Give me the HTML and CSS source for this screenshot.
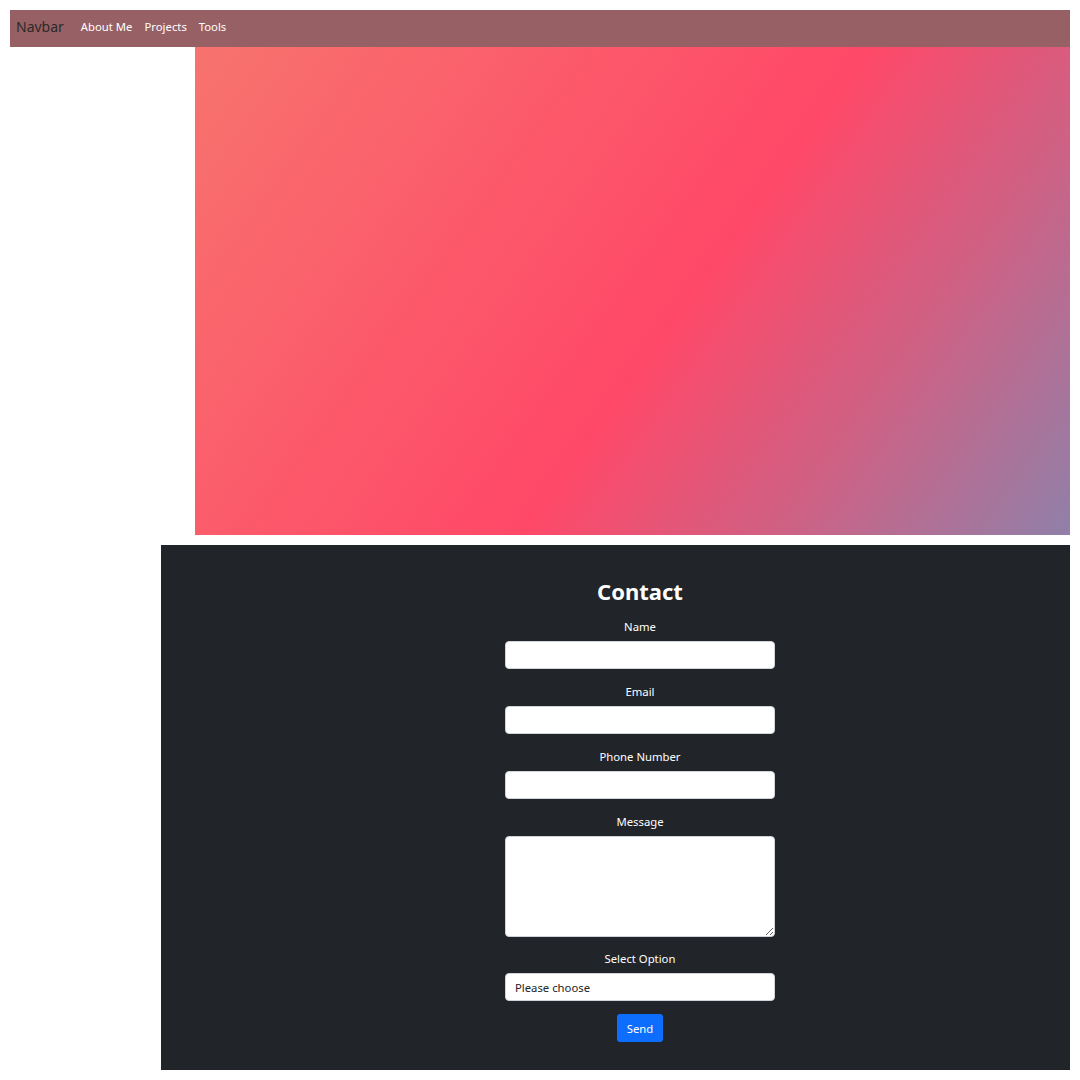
FILE: index.html
```html
<!DOCTYPE html>
<html>
<head>
<meta charset="utf-8">
<link rel="stylesheet" href="styles.css">
</head>
<body>
<nav class="navbar">
  <span class="brand">Navbar</span>
  <a class="nav-link" href="#">About Me</a>
  <a class="nav-link" href="#">Projects</a>
  <a class="nav-link" href="#">Tools</a>
</nav>
<div class="hero"></div>
<section class="contact">
  <h2 class="title">Contact</h2>
  <form class="form">
    <label class="label">Name</label>
    <input class="field" type="text">
    <label class="label">Email</label>
    <input class="field" type="text">
    <label class="label">Phone Number</label>
    <input class="field" type="text">
    <label class="label">Message</label>
    <textarea class="field area"></textarea>
    <label class="label">Select Option</label>
    <div class="field select">Please choose</div>
    <button class="btn" type="button">Send</button>
  </form>
</section>
</body>
</html>
```
FILE: styles.css
```css
body {
  margin: 10px;
  font-family: "Noto Sans", sans-serif;
  background: #fff;
}
.navbar {
  display: flex;
  align-items: center;
  height: 37px;
  background: #976064;
  padding-left: 6px;
  padding-bottom: 4px;
  box-sizing: border-box;
}
.brand {
  font-size: 14px;
  color: #2a2a2a;
  margin-right: 17px;
}
.nav-link {
  font-size: 11.3px;
  color: #fff;
  text-decoration: none;
  margin-right: 12px;
}
.hero {
  margin: 0 0 0 185px;
  height: 488px;
  background: linear-gradient(125.6deg, #f7736e 0%, #ff4868 55%, #cf6184 76%, #9080a9 100%);
}
.contact {
  margin: 10px 0 0 151px;
  background: #212529;
  height: 525px;
  padding-top: 31px;
  padding-left: 49px;
  box-sizing: border-box;
  display: flex;
  flex-direction: column;
  align-items: center;
}
.title {
  margin: 0 0 12px;
  font-size: 22px;
  font-weight: 700;
  color: #fff;
  line-height: 30px;
}
.form {
  width: 270px;
  display: flex;
  flex-direction: column;
  align-items: center;
}
.label {
  font-size: 11.3px;
  color: #fff;
  line-height: 18px;
  margin-bottom: 5px;
}
.field {
  width: 100%;
  height: 28px;
  box-sizing: border-box;
  border: 1px solid #ced4da;
  border-radius: 4px;
  background: #fff;
  margin: 0 0 14px;
  padding: 0 9px;
  font-family: inherit;
  font-size: 11.3px;
  color: #212529;
}
.area {
  height: 101px;
  margin-bottom: 13px;
  resize: vertical;
}
.select {
  display: flex;
  align-items: center;
  margin-bottom: 13px;
}
.btn {
  background: #0d6efd;
  color: #fff;
  border: none;
  border-radius: 3px;
  width: 46px;
  height: 28px;
  font-family: inherit;
  font-size: 11.3px;
  padding: 0;
}
```
